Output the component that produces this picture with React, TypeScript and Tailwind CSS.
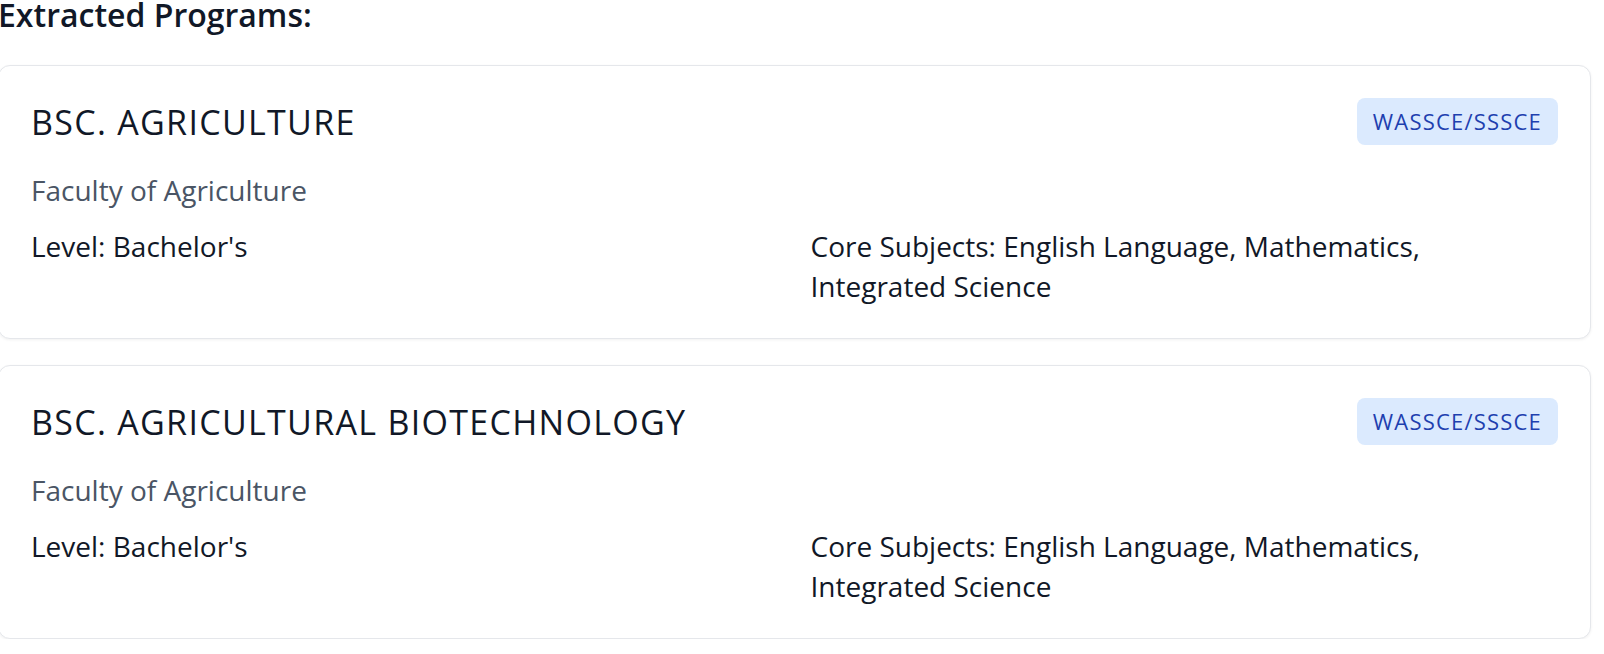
import React from "react";

type Program = {
  name: string;
  faculty: string;
  level: string;
  core: string;
  badge: string;
};

const programs: Program[] = [
  {
    name: "BSC. AGRICULTURE",
    faculty: "Faculty of Agriculture",
    level: "Bachelor's",
    core: "English Language, Mathematics, Integrated Science",
    badge: "WASSCE/SSSCE",
  },
  {
    name: "BSC. AGRICULTURAL BIOTECHNOLOGY",
    faculty: "Faculty of Agriculture",
    level: "Bachelor's",
    core: "English Language, Mathematics, Integrated Science",
    badge: "WASSCE/SSSCE",
  },
];

function ProgramCard({ p }: { p: Program }) {
  return (
    <div className="rounded-xl border border-[#e5e7eb] bg-white p-8 shadow-[0_1px_3px_rgba(0,0,0,0.06)]">
      <div className="flex items-start justify-between">
        <h3 className="text-[34px] leading-[48px] font-normal tracking-[1.3px] text-[#111827]">{p.name}</h3>
        <span className="rounded-lg bg-[#dbeafe] px-4 py-2 text-[22px] leading-[31px] tracking-[1.2px] text-[#1e40af]">
          {p.badge}
        </span>
      </div>
      <p className="mt-6 text-[28px] leading-[40px] text-[#4a5565]">{p.faculty}</p>
      <div className="mt-4 grid grid-cols-2 gap-x-8 text-[28px] leading-[40px] text-[#111827]">
        <div>
          <span className="font-medium">Level:</span> {p.level}
        </div>
        <div className="pr-4">
          <span className="font-medium">Core Subjects:</span> {p.core}
        </div>
      </div>
    </div>
  );
}

export default function App() {
  return (
    <div
      className="-ml-[2px] w-[1593px] bg-white"
      style={{ fontFamily: '"Open Sans", "Noto Sans", sans-serif' }}
    >
      <h2 className="mb-[35px] text-[32px] leading-[30px] font-semibold text-[#111827]">
        Extracted Programs:
      </h2>
      <div className="flex flex-col gap-[26px]">
        {programs.map((p) => (
          <ProgramCard key={p.name} p={p} />
        ))}
      </div>
    </div>
  );
}
